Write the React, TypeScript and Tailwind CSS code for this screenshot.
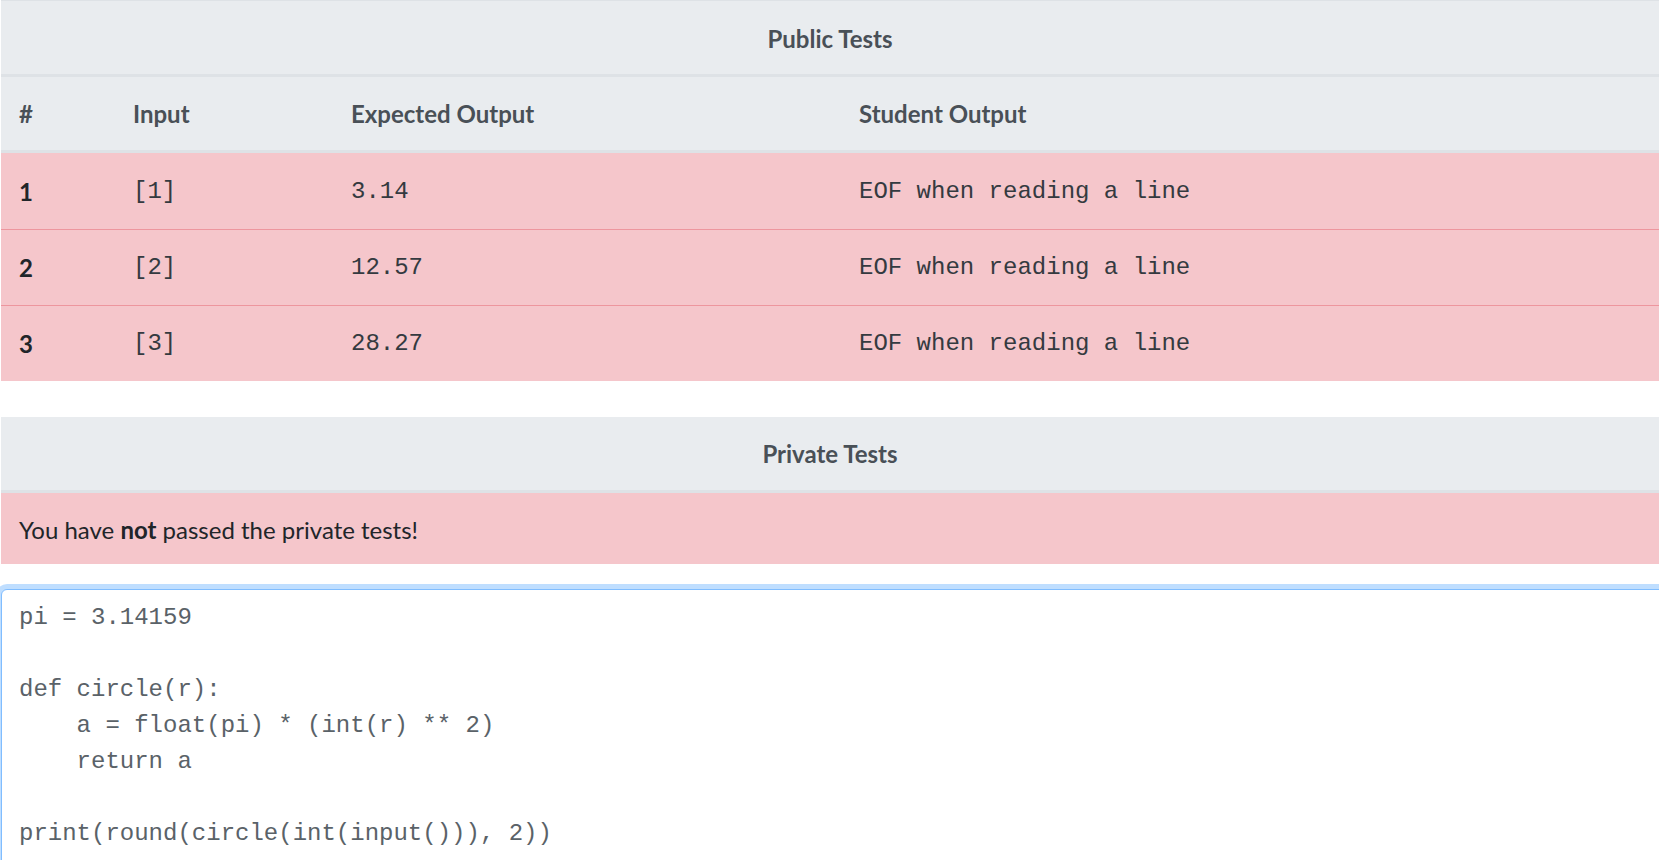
const sans = "font-['Lato','Segoe_UI','Open_Sans',sans-serif]";
const mono = "font-['Liberation_Mono','Courier_New',monospace]";

const rows = [
  { n: "1", input: "[1]", expected: "3.14", student: "EOF when reading a line" },
  { n: "2", input: "[2]", expected: "12.57", student: "EOF when reading a line" },
  { n: "3", input: "[3]", expected: "28.27", student: "EOF when reading a line" },
];

const code = `pi = 3.14159

def circle(r):
    a = float(pi) * (int(r) ** 2)
    return a

print(round(circle(int(input())), 2))`;

const cols = "grid grid-cols-[114px_218px_508px_1fr]";

export default function App() {
  return (
    <div className={`h-[860px] w-full overflow-hidden bg-white pl-px text-[24px] ${sans}`}>
      {/* public tests */}
      <section className="border-t border-[#dee2e6]">
        <div className="flex h-[76px] items-center justify-center border-b-[3px] border-[#dee2e6] bg-[#e9ecef] pt-[2px] font-bold text-[#495057]">
          Public Tests
        </div>
        <div className={`${cols} h-[76px] items-center border-b-[3px] border-[#dee2e6] bg-[#e9ecef] pt-px font-bold text-[#495057]`}>
          <div className="pl-[18px]">#</div>
          <div className="pl-[18px]">Input</div>
          <div className="pl-[18px]">Expected Output</div>
          <div className="pl-[18px]">Student Output</div>
        </div>
        {rows.map((r, i) => (
          <div
            key={r.n}
            className={`${cols} items-center bg-[#f5c6cb] pt-px text-[#212529] ${
              i === 0 ? "h-[76px]" : "h-[76px] border-t border-[#ed969e]"
            }`}
          >
            <div className="pl-[18px] font-bold">{r.n}</div>
            <div className={`pl-[18px] text-[#343a40] ${mono}`}>{r.input}</div>
            <div className={`pl-[18px] text-[#343a40] ${mono}`}>{r.expected}</div>
            <div className={`pl-[18px] text-[#343a40] ${mono}`}>{r.student}</div>
          </div>
        ))}
      </section>

      {/* private tests */}
      <section className="mt-[36px]">
        <div className="flex h-[76px] items-center justify-center border-b-[3px] border-[#dee2e6] bg-[#e9ecef] pt-px font-bold text-[#495057]">
          Private Tests
        </div>
        <div className="flex h-[71px] items-center bg-[#f5c6cb] pl-[18px] pt-[2px] text-[#212529]">
          <span>
            You have <b>not</b> passed the private tests!
          </span>
        </div>
      </section>

      {/* code */}
      <div className="mr-[-12px] mt-[25px] h-[400px] rounded-[6px] border-[1.5px] border-[#80bdff] bg-white px-[17px] pt-[10px] shadow-[0_0_0_5px_rgba(0,123,255,0.25)]">
        <pre className={`text-[24px] leading-[36px] text-[#5a6268] ${mono}`}>{code}</pre>
      </div>
    </div>
  );
}
